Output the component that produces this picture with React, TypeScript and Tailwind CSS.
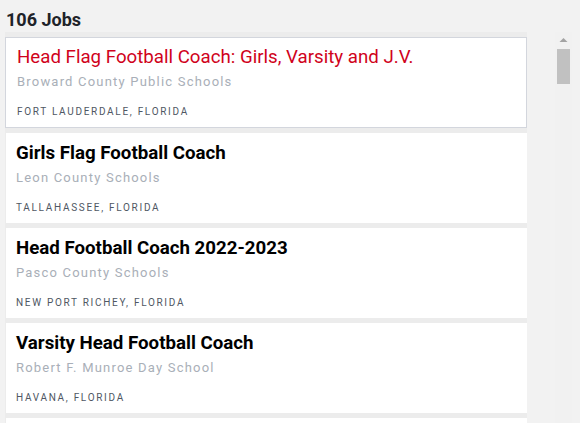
const jobs = [
  { title: 'Head Flag Football Coach: Girls, Varsity and J.V.', org: 'Broward County Public Schools', place: 'Fort Lauderdale, Florida' },
  { title: 'Girls Flag Football Coach', org: 'Leon County Schools', place: 'Tallahassee, Florida' },
  { title: 'Head Football Coach 2022-2023', org: 'Pasco County Schools', place: 'New Port Richey, Florida' },
  { title: 'Varsity Head Football Coach', org: 'Robert F. Munroe Day School', place: 'Havana, Florida' },
  { title: 'Assistant Football Coach', org: 'Duval County Public Schools', place: 'Jacksonville, Florida' },
]

// plain look-alike of the classic scrollbar on the right
function ScrollBar() {
  return (
    <div className="flex w-[17px] flex-col items-center bg-[#f1f1f1]">
      <svg width="9" height="6" viewBox="0 0 9 6" className="mt-[5px]">
        <path d="M0.5 5 L4.5 1 L8.5 5 Z" fill="#a3a3a3" />
      </svg>
      <div className="mt-[6px] h-[35px] w-[13px] bg-[#c1c1c1]" />
    </div>
  )
}

export default function App() {
  return (
    <div className="h-[423px] w-[580px] overflow-hidden bg-[#f2f2f2] font-['Roboto',sans-serif]">
      <h1 className="h-8 pl-[6px] pt-[9px] text-[18px] font-bold leading-[22px] text-[#1e2329]">106 Jobs</h1>
      <div className="flex h-[391px] w-[572px]">
        <div className="flex-1 overflow-hidden">
          <div className="ml-[5px] flex w-[522px] flex-col gap-[5px] bg-[#ececec] pl-[1px] pt-[5px]">
            {jobs.map((job, i) => {
              const active = i === 0
              return (
                <div
                  key={job.title}
                  className={
                    active
                      ? '-ml-[1px] border border-[#d3d6dd] bg-white px-[11px] pb-[8px] pt-[7px]'
                      : 'bg-white px-[10px] pb-[8px] pt-[8px]'
                  }
                >
                  <div
                    className={
                      active
                        ? 'text-[18.7px] leading-6 text-[#d0021b]'
                        : 'text-[18.7px] font-bold leading-6 text-black'
                    }
                  >
                    {job.title}
                  </div>
                  <div className="mt-1 text-[13px] leading-[18px] tracking-[1.2px] text-[#a9afb8]">{job.org}</div>
                  <div className="mt-[14px] text-[10px] uppercase leading-[14px] tracking-[1.7px] text-[#4f5763]">
                    {job.place}
                  </div>
                </div>
              )
            })}
          </div>
        </div>
        <ScrollBar />
      </div>
    </div>
  )
}
